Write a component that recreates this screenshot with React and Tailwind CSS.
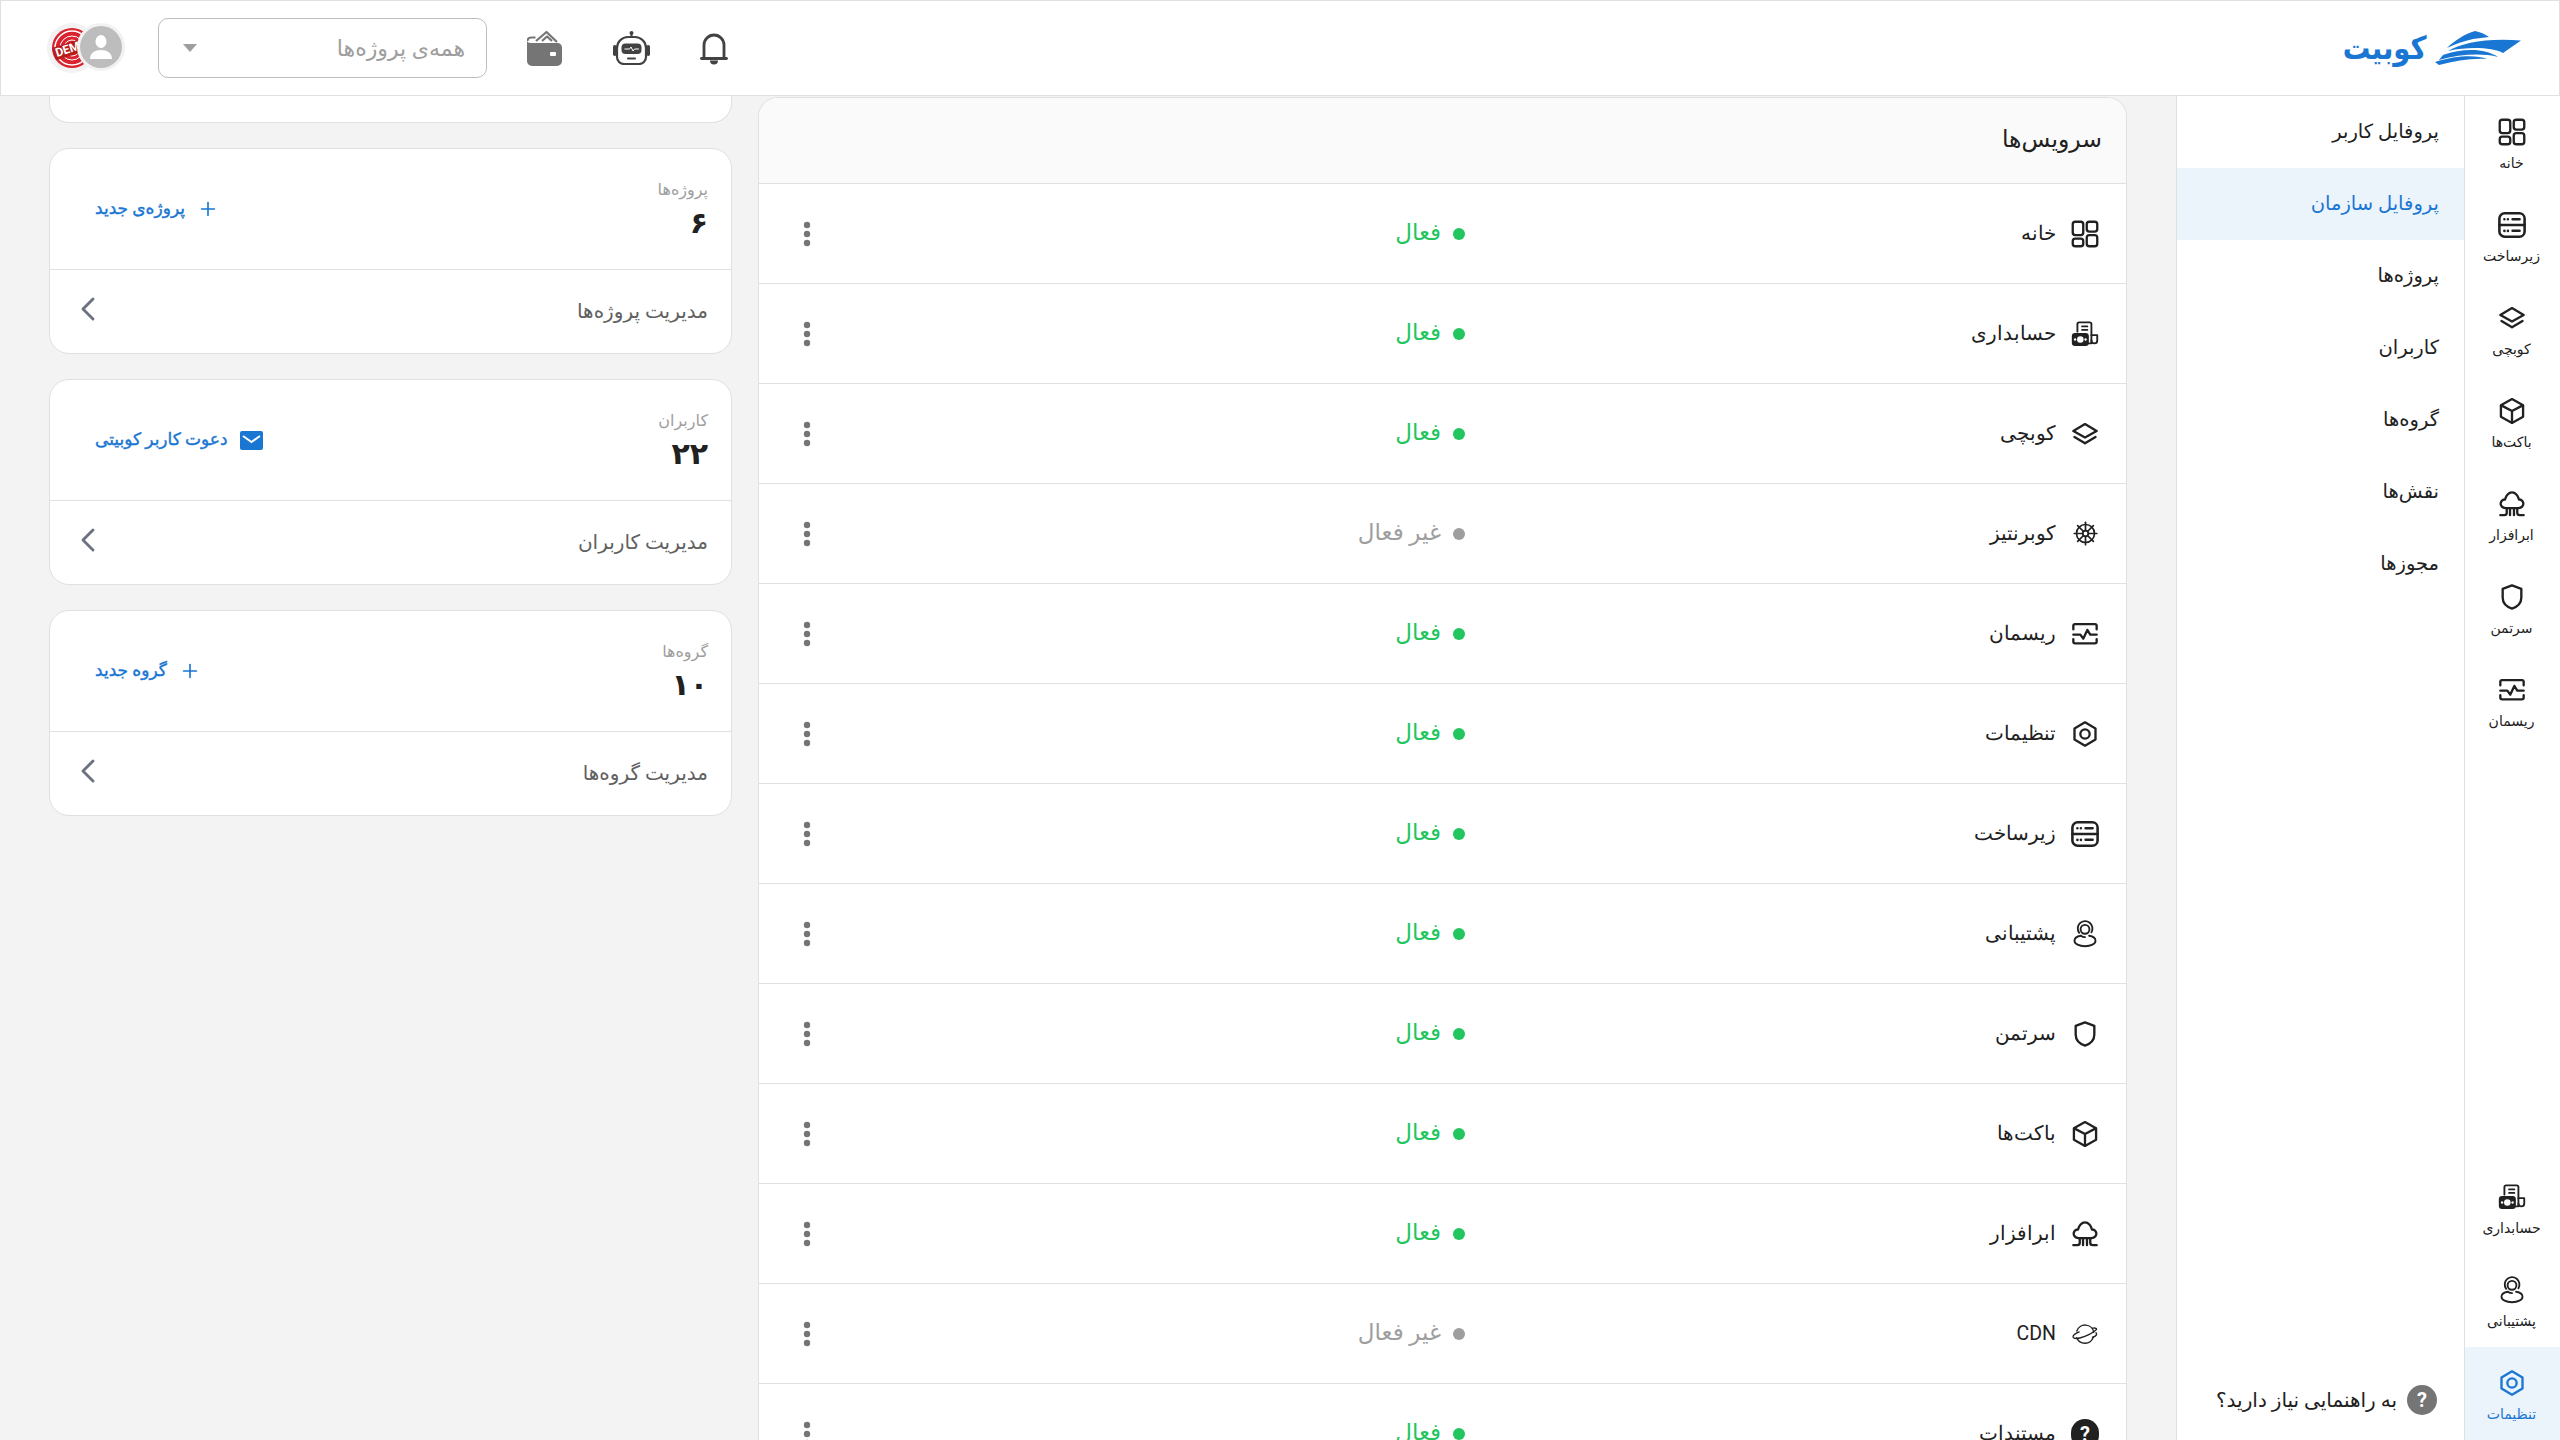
import { Plus, ChevronLeft, ShipWheel } from 'lucide-react';

// ─────────────────────────────────────────────────────────────────────────────
// Icons - drawn by hand, all on a 24 unit box
// ─────────────────────────────────────────────────────────────────────────────

function Svg({ size = 28, width = 2, className = '', children }) {
  return (
    <svg
      width={size}
      height={size}
      viewBox="0 0 24 24"
      fill="none"
      stroke="currentColor"
      strokeWidth={width}
      strokeLinecap="round"
      strokeLinejoin="round"
      className={className}
    >
      {children}
    </svg>
  );
}

const HomeIcon = (p) => (
  <Svg {...p}>
    <rect x="1.500" y="1.500" width="9" height="11.500" rx="2.200" />
    <rect x="13.500" y="1.500" width="9" height="8.500" rx="2.200" />
    <rect x="13.500" y="13" width="9" height="9.500" rx="2.200" />
    <rect x="1.500" y="16" width="9" height="6.500" rx="2.200" />
  </Svg>
);

const InfraIcon = (p) => (
  <Svg {...p} width={2.200}>
    <rect x="1.200" y="2" width="21.600" height="20" rx="4.500" />
    <path d="M1.200 12h21.600" />
    <path d="M5.500 7v.1M8.500 7v.1M12.500 7h6M5.500 17v.1M8.500 17v.1M12.500 17h6" />
  </Svg>
);

const LayersIcon = (p) => (
  <Svg {...p}>
    <path d="M12 3.500 22 9.500 12 15 2 9.500Z" />
    <path d="M3 14.500 12 20l9-5.500" />
  </Svg>
);

const BoxIcon = (p) => (
  <Svg {...p}>
    <path d="M12 1.800 21.500 7v10L12 22.200 2.500 17V7Z" />
    <path d="M2.800 7.200 12 12l9.200-4.800M12 12v10" />
  </Svg>
);

const CloudIcon = (p) => (
  <Svg {...p}>
    <path d="M6.500 15.500C3.500 15.300 2 13.300 2.300 11.200 2.600 9.200 4.300 8 6 8.200 6.700 4.800 9.200 2 12 2s5.300 2.800 6 6.200c1.700-.2 3.400 1 3.700 3 .3 2.100-1.200 4.100-4.200 4.300" />
    <path d="M6.500 15.500h11" />
    <path d="M7.500 15.500v4a2 2 0 0 1-2 2H2M16.500 15.500v4a2 2 0 0 0 2 2H22M10.300 15.500v6M13.700 15.500v6" />
  </Svg>
);

const ShieldIcon = (p) => (
  <Svg {...p}>
    <path d="M12 2 20 5v7.500c0 4.500-3.500 8-8 9.500-4.500-1.500-8-5-8-9.500V5Z" />
  </Svg>
);

const PulseIcon = (p) => (
  <Svg {...p}>
    <path d="M2 8V5a1.500 1.500 0 0 1 1.500-1.500h17A1.500 1.500 0 0 1 22 5v3" />
    <path d="M2 12.500h6l2.500 3.500L14 8.500l2.500 4H22" />
    <path d="M2 16.500v2A1.500 1.500 0 0 0 3.500 20h17a1.500 1.500 0 0 0 1.500-1.500v-2" />
  </Svg>
);

const SettingsIcon = (p) => (
  <Svg {...p}>
    <path d="M12 2 21 7.200v9.600L12 22l-9-5.200V7.200Z" />
    <circle cx="12" cy="12" r="4" />
  </Svg>
);

const SupportIcon = (p) => (
  <Svg {...p} width={1.600}>
    <circle cx="12" cy="8" r="3.800" />
    <path d="M7 11A6.300 6.300 0 1 1 17.500 10.500" />
    <path d="M8.500 13.500C5.500 14 3 15.300 3 17.700 3 20.500 7 22.500 12 22.500s9-2 9-4.800c0-2.400-2.500-3.700-5.500-4.200" />
    <path d="M8.500 13.500c1 .8 2.200 1.200 3.500 1.200" />
  </Svg>
);

const AccountingIcon = (p) => (
  <Svg {...p} width={1.600}>
    <path d="M5.500 10V3.500A1.500 1.500 0 0 1 7 2h9a1.500 1.500 0 0 1 1.500 1.500V20H15" />
    <path d="M9.500 5.500h4.500M9.500 8.500h4.500" />
    <path d="M17.500 13h5v4.500a2.500 2.500 0 0 1-5 0" />
    <rect x="1.500" y="12" width="13" height="9.500" rx="2" fill="currentColor" />
    <circle cx="8" cy="16.700" r="2.800" fill="#fff" stroke="none" />
    <circle cx="3.500" cy="16.700" r="1" fill="#fff" stroke="none" />
    <circle cx="12.500" cy="16.700" r="1" fill="#fff" stroke="none" />
  </Svg>
);

const CdnIcon = (p) => (
  <Svg {...p} width={1.200}>
    <path d="M5 9.500a7.500 7.500 0 0 1 14.500 1M19 15a7.500 7.500 0 0 1-14 .2" />
    <path d="M7 10.200C3.500 11.500 1.300 13.500 1.800 14.800c.7 1.500 5 1.200 10-.8s8.500-4.500 9.800-5.700c1-1-.6-1.800-3-1.300" />
    <path d="M21.500 11c1 1.500.2 2.800-3 3.800" />
  </Svg>
);

const DocsIcon = ({ size = 28 }) => (
  <span
    className="flex items-center justify-center rounded-full bg-[#212121] text-white font-bold font-['Roboto',sans-serif] text-[20px] leading-none"
    style={{ width: size + 2, height: size + 2 }}
  >
    ?
  </span>
);

const BellIcon = () => (
  <svg width="28" height="33" viewBox="0 0 28 33" fill="none" stroke="#424242" strokeWidth="2.800" strokeLinecap="round">
    <path d="M4 26V13a10 10 0 0 1 20 0v13" />
    <path d="M1.500 26.500h25" />
    <path d="M10 28.500h8a4 4 0 0 1-8 0Z" fill="#424242" stroke="none" />
  </svg>
);

const RobotIcon = () => (
  <svg width="37" height="34" viewBox="0 0 37 34">
    <circle cx="18.500" cy="2" r="2" fill="#424242" />
    <path d="M18.500 3v4" stroke="#424242" strokeWidth="2" />
    <rect x="0" y="14" width="3.500" height="11" rx="1.700" fill="#424242" />
    <rect x="33.500" y="14" width="3.500" height="11" rx="1.700" fill="#424242" />
    <path d="M4 17a11 11 0 0 1 11-11h7a11 11 0 0 1 11 11v9a7 7 0 0 1-7 7H11a7 7 0 0 1-7-7Z" fill="#fff" stroke="#424242" strokeWidth="2.200" />
    <rect x="8.500" y="12.500" width="20" height="10.500" rx="4" fill="#424242" />
    <path d="M11.500 18h5l1.500-2 2 4 1.500-2h4.500" stroke="#fff" strokeWidth="1" fill="none" />
    <rect x="14" y="26.500" width="9" height="2" rx="1" fill="#424242" />
  </svg>
);

const WalletIcon = () => (
  <svg width="36" height="36" viewBox="0 0 36 36">
    <path d="M9 11 19.500 2 30 12M15 11l5-4.500 5 4.500" fill="none" stroke="#757575" strokeWidth="2.200" strokeLinejoin="round" />
    <path d="M0 10.500c0 1.500 1.500 2.500 3.500 2.500h27a4.500 4.500 0 0 1 4.500 4.500V31a5 5 0 0 1-5 5H5a5 5 0 0 1-5-5Z" fill="#757575" />
    <path d="M0.500 11c0-2 1.500-3.500 4-3.500h4" stroke="#757575" strokeWidth="2" fill="none" />
    <rect x="23" y="22" width="6" height="4" rx="1" fill="#fff" />
  </svg>
);

const MailIcon = () => (
  <svg width="23" height="19" viewBox="0 0 23 19">
    <rect width="23" height="19" rx="2" fill="#1976d2" />
    <path d="M3 5l8.500 6L20 5" fill="none" stroke="#fff" strokeWidth="2" />
  </svg>
);

const BoatLogo = () => (
  <svg width="86" height="34" viewBox="0 0 86 34" fill="#1976d2">
    <path d="M12 17C20 9 30 3 40 0c5 1 10 3 14 6L38 8C29 10 20 13 12 17Z" />
    <path d="M13 20C28 12 50 7 86 9.500L68 22C58 17 36 15 13 20Z" />
    <path d="M8 24C28 17 50 17 63 26 47 22 26 23 4 29Z" />
    <path d="M0 31C22 24 42 24 52 28 36 27 20 30 4 34Z" />
  </svg>
);

// ─────────────────────────────────────────────────────────────────────────────
// Data
// ─────────────────────────────────────────────────────────────────────────────

const RAIL_TOP = [
  { label: 'خانه', Icon: HomeIcon },
  { label: 'زیرساخت', Icon: InfraIcon },
  { label: 'کوبچی', Icon: LayersIcon },
  { label: 'باکت‌ها', Icon: BoxIcon },
  { label: 'ابرافزار', Icon: CloudIcon },
  { label: 'سرتمن', Icon: ShieldIcon },
  { label: 'ریسمان', Icon: PulseIcon },
];

const RAIL_BOTTOM = [
  { label: 'حسابداری', Icon: AccountingIcon },
  { label: 'پشتیبانی', Icon: SupportIcon },
  { label: 'تنظیمات', Icon: SettingsIcon, active: true },
];

const MENU = [
  { label: 'پروفایل کاربر' },
  { label: 'پروفایل سازمان', active: true },
  { label: 'پروژه‌ها' },
  { label: 'کاربران' },
  { label: 'گروه‌ها' },
  { label: 'نقش‌ها' },
  { label: 'مجوزها' },
];

const KubeIcon = () => <ShipWheel size={27} strokeWidth={1.500} />;

const SERVICES = [
  { name: 'خانه', Icon: HomeIcon, on: true },
  { name: 'حسابداری', Icon: AccountingIcon, on: true },
  { name: 'کوبچی', Icon: LayersIcon, on: true },
  { name: 'کوبرنتیز', Icon: KubeIcon, on: false },
  { name: 'ریسمان', Icon: PulseIcon, on: true },
  { name: 'تنظیمات', Icon: SettingsIcon, on: true },
  { name: 'زیرساخت', Icon: InfraIcon, on: true },
  { name: 'پشتیبانی', Icon: SupportIcon, on: true },
  { name: 'سرتمن', Icon: ShieldIcon, on: true },
  { name: 'باکت‌ها', Icon: BoxIcon, on: true },
  { name: 'ابرافزار', Icon: CloudIcon, on: true },
  { name: 'CDN', Icon: CdnIcon, on: false },
  { name: 'مستندات', Icon: DocsIcon, on: true },
];

const CARDS = [
  { title: 'پروژه‌ها', count: '۶', action: 'پروژه‌ی جدید', actionIcon: 'plus', footer: 'مدیریت پروژه‌ها' },
  { title: 'کاربران', count: '۲۲', action: 'دعوت کاربر کوبیتی', actionIcon: 'mail', footer: 'مدیریت کاربران' },
  { title: 'گروه‌ها', count: '۱۰', action: 'گروه جدید', actionIcon: 'plus', footer: 'مدیریت گروه‌ها' },
];

// ─────────────────────────────────────────────────────────────────────────────
// Parts
// ─────────────────────────────────────────────────────────────────────────────

function DemoStamp() {
  return (
    <div className="relative w-[40px] h-[40px] rounded-full bg-[#d9232e] overflow-hidden flex items-center justify-center">
      <svg className="absolute inset-0" width="40" height="40" viewBox="0 0 40 40" fill="none" stroke="#fff">
        <circle cx="20" cy="20" r="17" strokeWidth="1.500" />
        <circle cx="20" cy="20" r="12" strokeWidth="1" />
        <circle cx="20" cy="20" r="8" strokeWidth="1" />
      </svg>
      <span className="relative font-['Roboto',sans-serif] text-[12px] leading-[13px] font-bold text-white bg-[#b71c1c] px-[2px] -rotate-[18deg]" dir="ltr">DEMO</span>
    </div>
  );
}

function Header() {
  return (
    <header className="h-[96px] shrink-0 flex items-center bg-white border border-[#e0e0e0] pr-[38px] pl-[46px]">
      <div className="flex items-center gap-[8px]">
        <BoatLogo />
        <span className="text-[32px] font-semibold leading-none text-[#1976d2] origin-right scale-x-[.86]">کوبیت</span>
      </div>
      <div className="mr-auto flex items-center">
        <BellIcon />
        <span className="mr-[50px] flex"><RobotIcon /></span>
        <span className="mr-[50px] flex"><WalletIcon /></span>
        <div className="mr-[40px] w-[329px] h-[60px] rounded-[10px] border border-[#bdbdbd] flex items-center justify-between pr-[21px] pl-[24px]">
          <span className="text-[22px] text-[#9e9e9e]">همه‌ی پروژه‌ها</span>
          <span className="w-0 h-0 border-x-[7px] border-x-transparent border-t-[8px] border-t-[#9e9e9e]" />
        </div>
        <div className="mr-[33px] relative w-[78px] h-[50px]">
          <div className="absolute left-0 top-0 w-[50px] h-[50px] rounded-full bg-[#f2f2f2] flex items-center justify-center">
            <DemoStamp />
          </div>
          <div className="absolute right-0 top-0 w-[48px] h-[48px] rounded-full bg-[#f2f2f2] flex items-center justify-center">
            <div className="w-[42px] h-[42px] rounded-full bg-[#bdbdbd] flex items-center justify-center">
              <svg width="24" height="26" viewBox="0 0 24 26" fill="#fff">
                <ellipse cx="12" cy="7.500" rx="5.500" ry="6.500" />
                <path d="M1 25c0-6 5-9 11-9s11 3 11 9Z" />
              </svg>
            </div>
          </div>
        </div>
      </div>
    </header>
  );
}

function RailItem({ label, Icon, active }) {
  return (
    <div className={`h-[93px] flex flex-col items-center pt-[22px] pr-[2px] ${active ? 'bg-[#ebf3fb] text-[#1976d2]' : 'text-[#212121]'}`}>
      <Icon />
      <span className="mt-[6px] text-[14px] leading-[22px]">{label}</span>
    </div>
  );
}

function Rail() {
  return (
    <nav className="w-[96px] shrink-0 bg-white border-l border-[#e0e0e0] flex flex-col justify-between">
      <div>{RAIL_TOP.map((item) => <RailItem key={item.label} {...item} />)}</div>
      <div>{RAIL_BOTTOM.map((item) => <RailItem key={item.label} {...item} />)}</div>
    </nav>
  );
}

function SideMenu() {
  return (
    <aside className="w-[288px] shrink-0 bg-white border-l border-[#e0e0e0] flex flex-col justify-between">
      <div>
        {MENU.map((item) => (
          <div
            key={item.label}
            className={`h-[72px] flex items-center pr-[25px] text-[19.500px] ${item.active ? 'bg-[#ebf3fb] text-[#1976d2]' : 'text-[#212121]'}`}
          >
            {item.label}
          </div>
        ))}
      </div>
      <div className="flex items-center gap-[10px] pr-[27px] pb-[25px] text-[20px] text-[#212121]">
        <span className="w-[30px] h-[30px] rounded-full bg-[#757575] text-white font-bold font-['Roboto',sans-serif] text-[20px] flex items-center justify-center">?</span>
        به راهنمایی نیاز دارید؟
      </div>
    </aside>
  );
}

function ServiceRow({ name, Icon, on }) {
  return (
    <div className="h-[100px] shrink-0 flex items-center border-t border-[#e0e0e0]">
      <div className="w-[661px] flex items-center pr-[27px] text-[19.500px] text-[#212121]">
        <span className="w-[28px] flex justify-center"><Icon /></span>
        <span className="mr-[15px] font-['Roboto','Noto_Sans',sans-serif]">{name}</span>
      </div>
      <div className={`flex items-center gap-[12px] text-[23px] ${on ? 'text-[#22c55e]' : 'text-[#9e9e9e]'}`}>
        <span className={`w-[12px] h-[12px] rounded-full ${on ? 'bg-[#22c55e]' : 'bg-[#9e9e9e]'}`} />
        {on ? 'فعال' : 'غیر فعال'}
      </div>
      <svg className="mr-auto ml-[44px]" width="8" height="26" viewBox="0 0 8 26" fill="#757575">
        <circle cx="4" cy="4" r="3.200" />
        <circle cx="4" cy="13" r="3.200" />
        <circle cx="4" cy="22" r="3.200" />
      </svg>
    </div>
  );
}

function ServicesPanel() {
  return (
    <section className="w-[1369px] shrink-0 mt-[1px] bg-white border border-b-0 border-[#e0e0e0] rounded-t-[20px] overflow-hidden flex flex-col">
      <div className="h-[85px] shrink-0 flex items-center pr-[24px] pb-[1px] bg-[#fafafa] text-[23.500px] text-[#212121]">سرویس‌ها</div>
      {SERVICES.map((s) => <ServiceRow key={s.name} {...s} />)}
    </section>
  );
}

function StatCard({ title, count, action, actionIcon, footer }) {
  return (
    <div className="h-[206px] shrink-0 bg-white border border-[#e0e0e0] rounded-[20px] flex flex-col">
      <div className="h-[120px] shrink-0 flex items-center justify-between pr-[23px] pl-[45px]">
        <div className="flex flex-col pt-[3px]">
          <span className="text-[16px] leading-[24px] text-[#9e9e9e]">{title}</span>
          <span className="text-[30px] leading-[42px] font-semibold text-[#212121]">{count}</span>
        </div>
        <div className="flex items-center gap-[12px] text-[17px] text-[#1976d2] [-webkit-text-stroke:0.4px_#1976d2]">
          {actionIcon === 'plus' ? <Plus size={22} strokeWidth={1.800} /> : <MailIcon />}
          {action}
        </div>
      </div>
      <div className="flex-1 flex items-center justify-between border-t border-[#e0e0e0] pr-[23px] pl-[18px] text-[20px] text-[#616161]">
        <span className="pb-[2px]">{footer}</span>
        <ChevronLeft size={40} strokeWidth={1.700} className="text-[#6b7280] mb-[5px]" />
      </div>
    </div>
  );
}

function StatColumn() {
  return (
    <div className="w-[683px] shrink-0 flex flex-col gap-[25px]">
      <div className="h-[27px] shrink-0 bg-white border border-t-0 border-[#e0e0e0] rounded-b-[20px]" />
      {CARDS.map((c) => <StatCard key={c.title} {...c} />)}
    </div>
  );
}

export default function App() {
  return (
    <div dir="rtl" className="h-screen flex flex-col overflow-hidden bg-[#f3f3f3] font-['Roboto','Noto_Sans','DejaVu_Sans',sans-serif]">
      <Header />
      <div className="flex-1 flex min-h-0">
        <Rail />
        <SideMenu />
        <main className="flex-1 flex gap-[26px] pr-[49px] overflow-hidden">
          <ServicesPanel />
          <StatColumn />
        </main>
      </div>
    </div>
  );
}
